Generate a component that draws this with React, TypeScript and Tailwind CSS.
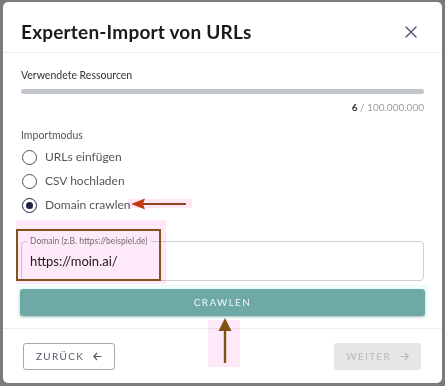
import React from "react";

const Radio = ({ checked, label }: { checked?: boolean; label: string }) => (
  <label className="flex items-center h-6 gap-[8px]">
    <span
      className={`flex items-center justify-center w-[15px] h-[15px] rounded-full border-[1.5px] ${
        checked ? "border-[#1f2340]" : "border-[#4f535c]"
      }`}
    >
      {checked && <span className="w-[7px] h-[7px] rounded-full bg-[#1f2340]" />}
    </span>
    <span className="text-[12px] text-[#555]">{label}</span>
  </label>
);

export default function App() {
  return (
    <div
      className="w-[445px] h-[386px] bg-[#7b7b7b] pt-[2px] pl-[3px] overflow-hidden"
      style={{ fontFamily: "Lato, 'Noto Sans', sans-serif" }}
    >
      <div className="relative w-[439px] h-[381px] bg-white rounded-[5px] flex flex-col">
        {/* Header */}
        <div className="h-[51px] pt-[10px] flex items-center justify-between pl-[18px] pr-[25px] border-b border-[#eeeeee]">
          <h1 className="text-[19px] font-bold text-[#1a1a1c] tracking-[0.2px]">
            Experten-Import von URLs
          </h1>
          <svg width="12" height="12" viewBox="0 0 12 12" className="text-[#5a5f78]">
            <path d="M1 1L11 11M11 1L1 11" stroke="currentColor" strokeWidth="1.5" strokeLinecap="round" />
          </svg>
        </div>

        {/* Body */}
        <div className="flex flex-col px-[18px] pt-[15px]">
          <div className="text-[10.5px] text-[#333] leading-[14px]">Verwendete Ressourcen</div>
          <div className="mt-[7px] h-[5px] w-full rounded-full bg-[#c2c5cb]" />
          <div className="mt-[6px] text-right text-[10px] leading-[14px]">
            <span className="font-bold text-[#333]">6</span>
            <span className="text-[#9c9c9c]"> / 100.000.000</span>
          </div>

          <div className="mt-[15px] text-[10.5px] text-[#555] leading-[13px]">Importmodus</div>
          <div className="mt-[3px] flex flex-col pl-[1px]">
            <Radio label="URLs einfügen" />
            <Radio label="CSV hochladen" />
            <Radio label="Domain crawlen" checked />
          </div>

          {/* Input */}
          <div className="relative mt-[24px] h-[40px] border border-[#cfcfd4] rounded-[4px] flex items-center pl-[8px]">
            <span className="absolute -top-[7px] left-[5px] px-[3px] bg-white text-[8.5px] leading-[12px] text-[#777]">
              Domain (z.B. https://beispiel.de)
            </span>
            <span className="text-[13px] text-[#222] mt-[2px]">https://moin.ai/</span>
          </div>

          {/* Crawl button with highlight halo */}
          <div className="mt-[4px] -mx-[4px] p-[3px] bg-[#effcfc]">
            <button className="h-[27px] w-full rounded-[3px] bg-[#6ea9a6] text-[#eef7f6] text-[10px] tracking-[1.3px] shadow-[0_1px_2px_rgba(0,0,0,0.25)]">
              CRAWLEN
            </button>
          </div>
        </div>

        {/* Footer */}
        <div className="mt-auto mb-[13px] border-t border-[#eeeeee] pt-[14px] pl-[20px] pr-[21px] flex justify-between items-center">
          <button className="h-[27px] px-[12px] border border-[#a9a9ad] rounded-[3px] flex items-center gap-[9px] text-[10px] tracking-[1.3px] text-[#555a66]">
            ZURÜCK
            <svg width="9" height="9" viewBox="0 0 9 9">
              <path d="M8.5 4.5H1M4 1L0.8 4.5L4 8" fill="none" stroke="currentColor" strokeWidth="1.2" />
            </svg>
          </button>
          <button className="h-[27px] px-[12px] rounded-[3px] bg-[#e6e6e6] flex items-center gap-[9px] text-[10px] tracking-[1.3px] text-[#b9b9b9]">
            WEITER
            <svg width="9" height="9" viewBox="0 0 9 9">
              <path d="M0.5 4.5H8M5 1L8.2 4.5L5 8" fill="none" stroke="currentColor" strokeWidth="1.2" />
            </svg>
          </button>
        </div>

        {/* Annotations */}
        <div className="absolute left-[125px] top-[197px] w-[64px] h-[9px] bg-[#fde6f6] mix-blend-multiply" />
        <svg className="absolute left-[125px] top-[193px]" width="66" height="18" viewBox="0 0 66 18">
          <path d="M14 9H58" stroke="#8c4a1e" strokeWidth="2" />
          <path d="M3 9L17 3.5L15 9L17 14.5Z" fill="#c23b12" />
        </svg>

        <div className="absolute left-[13px] top-[218px] w-[150px] h-[64px] bg-[#fde9f7] mix-blend-multiply" />
        <div className="absolute left-[13px] top-[227px] w-[145px] h-[52px] border-2 border-[#84521c]" />

        <div className="absolute left-[205px] top-[318px] w-[32px] h-[47px] bg-[#fde9f7] mix-blend-multiply" />
        <svg className="absolute left-[213px] top-[315px]" width="18" height="48" viewBox="0 0 18 48">
          <path d="M9 10V46" stroke="#7f5410" strokeWidth="2.4" />
          <path d="M9 1L15.5 14H2.5Z" fill="#7f5410" />
        </svg>
      </div>
    </div>
  );
}
